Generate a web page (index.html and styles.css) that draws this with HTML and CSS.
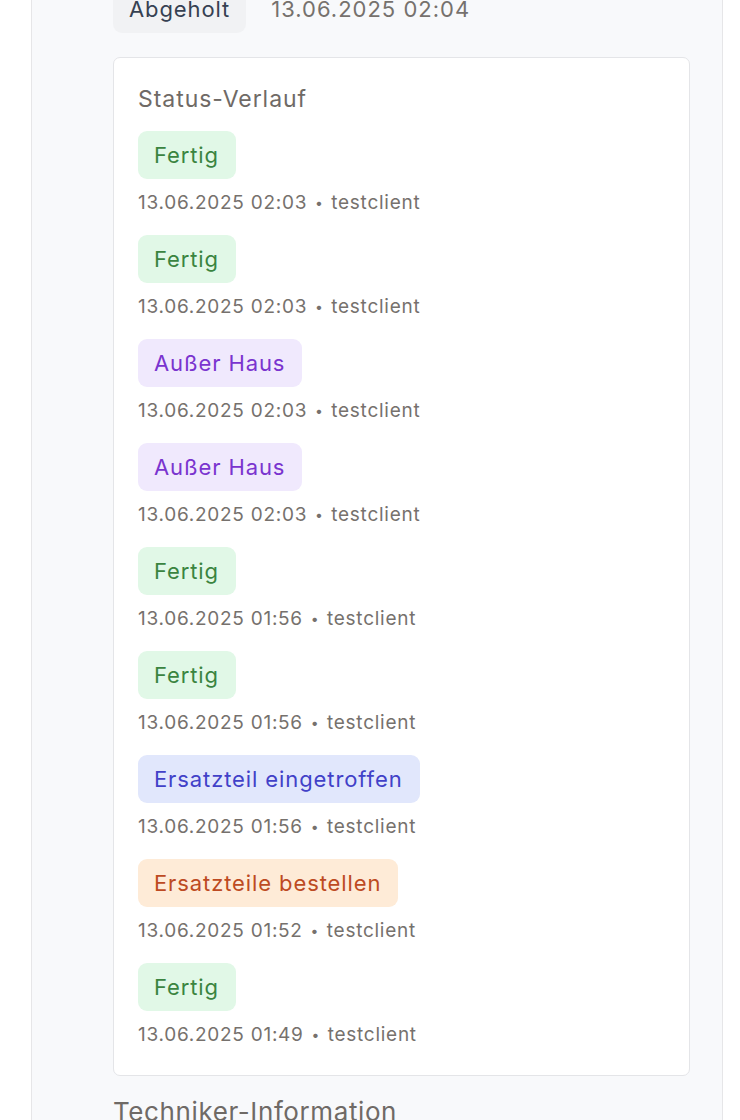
FILE: index.html
```html
<!DOCTYPE html>
<html lang="de">
<head>
<meta charset="utf-8">
<title>Status-Verlauf</title>
<link rel="stylesheet" href="styles.css">
</head>
<body>
<div class="panel">
  <div class="current">
    <span class="badge badge-gray">Abgeholt</span>
    <span class="current-date">13.06.2025 02:04</span>
  </div>
  <section class="card">
    <h3 class="card-title">Status-Verlauf</h3>
    <ul class="history">
      <li class="entry"><span class="badge badge-green">Fertig</span><div class="meta">13.06.2025 02:03 <span class="sep">•</span> testclient</div></li>
      <li class="entry"><span class="badge badge-green">Fertig</span><div class="meta">13.06.2025 02:03 <span class="sep">•</span> testclient</div></li>
      <li class="entry"><span class="badge badge-purple">Außer Haus</span><div class="meta">13.06.2025 02:03 <span class="sep">•</span> testclient</div></li>
      <li class="entry"><span class="badge badge-purple">Außer Haus</span><div class="meta">13.06.2025 02:03 <span class="sep">•</span> testclient</div></li>
      <li class="entry"><span class="badge badge-green">Fertig</span><div class="meta">13.06.2025 01:56 <span class="sep">•</span> testclient</div></li>
      <li class="entry"><span class="badge badge-green">Fertig</span><div class="meta">13.06.2025 01:56 <span class="sep">•</span> testclient</div></li>
      <li class="entry"><span class="badge badge-indigo">Ersatzteil eingetroffen</span><div class="meta">13.06.2025 01:56 <span class="sep">•</span> testclient</div></li>
      <li class="entry"><span class="badge badge-orange">Ersatzteile bestellen</span><div class="meta">13.06.2025 01:52 <span class="sep">•</span> testclient</div></li>
      <li class="entry"><span class="badge badge-green">Fertig</span><div class="meta">13.06.2025 01:49 <span class="sep">•</span> testclient</div></li>
    </ul>
  </section>
  <h2 class="section-title">Techniker-Information</h2>
</div>
</body>
</html>
```
FILE: styles.css
```css
* { box-sizing: border-box; }
html, body { margin: 0; padding: 0; background: #ffffff; }
body {
  font-family: Inter, "Noto Sans", "Liberation Sans", sans-serif;
  height: 1120px;
  overflow: hidden;
}
.panel {
  margin-left: 31px;
  width: 692px;
  min-height: 1200px;
  background: #f8f9fb;
  border-left: 1px solid #e6e6e8;
  border-right: 1px solid #e6e6e8;
  padding: 0 32px 0 81px;
}
.current {
  display: flex;
  align-items: center;
  gap: 25px;
  margin-top: -15px;
}
.current-date {
  font-size: 22px;
  letter-spacing: 1px;
  color: #76716d;
}
.badge {
  display: inline-block;
  font-size: 22px;
  letter-spacing: 0.9px;
  line-height: 28px;
  padding: 10px 17px 10px 16px;
  border-radius: 9px;
}
.badge-gray { background: #f1f2f4; color: #364152; padding: 10px 16px; }
.badge-green { background: #e1f8e7; color: #3a8440; }
.badge-purple { background: #f0e9fd; color: #7a34cf; }
.badge-indigo { background: #e1e7fc; color: #4141c8; }
.badge-orange { background: #feebd7; color: #bd4a22; }
.card {
  margin-top: 24px;
  background: #ffffff;
  border: 1px solid #e4e5e8;
  border-radius: 7px;
  padding: 27px 24px 28px;
}
.card-title {
  margin: 0 0 18px;
  font-size: 23px;
  letter-spacing: 0.95px;
  line-height: 28px;
  font-weight: 400;
  color: #6f6a66;
}
.history {
  list-style: none;
  margin: 0;
  padding: 0;
  display: flex;
  flex-direction: column;
  gap: 20px;
}
.entry {
  display: flex;
  flex-direction: column;
  align-items: flex-start;
}
.meta {
  margin-top: 12px;
  font-size: 19px;
  letter-spacing: 0.73px;
  line-height: 24px;
  color: #76716d;
}
.sep {
  display: inline-block;
  font-size: 14px;
  width: 12px;
  text-align: center;
  vertical-align: 1px;
}
.section-title {
  margin: 20px 0 0;
  font-size: 26px;
  letter-spacing: 0.6px;
  line-height: 32px;
  font-weight: 400;
  color: #6f6a66;
}
```
